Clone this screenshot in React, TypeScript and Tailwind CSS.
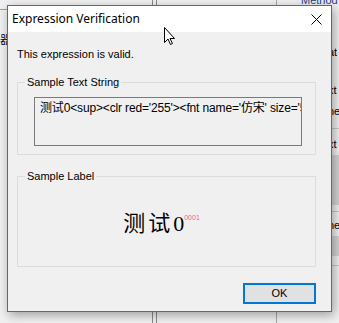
import React from 'react';

const sans = { fontFamily: '"Liberation Sans", "Noto Sans CJK SC", sans-serif' };

const GroupBox: React.FC<{ label: string; className?: string; children?: React.ReactNode }> = ({ label, className, children }) => {
    return (
        <div className={`relative w-[299px] border border-[#dcdcdc] ${className ?? ''}`}>
            <span className="absolute -top-[8px] left-[7px] bg-[#f0f0f0] px-[2px] text-[11px] leading-[14px] text-black">{label}</span>
            {children}
        </div>
    );
};

const App: React.FC = () => {
    return (
        <div className="relative w-[339px] h-[323px] overflow-hidden bg-[#f0f0f0]" style={sans}>
            {/* window behind the dialog */}
            <div className="absolute inset-0 flex">
                <div className="w-[8px] flex flex-col pt-[9px]">
                    <div className="h-px bg-[#a0a0a0]"></div>
                    <span className="mt-[24px] text-[11px] leading-[13px] text-black">器</span>
                </div>
                <div className="flex-1 flex pl-[144px]">
                    <div className="w-[5px] border-x border-[#8a8a8a]"></div>
                    <div className="w-[120px] border-r border-[#a8a8a8]"></div>
                </div>
                <div className="w-[39px] flex flex-col text-[11px] leading-[13px] text-black">
                    <span className="-mt-[6px] pl-[1px] text-[#1a3a8a]">Method</span>
                    <span className="mt-[39px] pl-[28px]">at</span>
                    <span className="mt-[25px] pl-[28px]">xt</span>
                    <span className="mt-[8px] pl-[28px]">ne</span>
                    <div className="mt-[10px] ml-[30px] h-px bg-[#c8c8c8]"></div>
                    <span className="mt-[9px] pl-[28px]">xt</span>
                    <div className="mt-[4px] ml-[30px] h-[50px] bg-[#d4d4d4]"></div>
                    <div className="mt-[6px] ml-[30px] h-px bg-[#c8c8c8]"></div>
                    <span className="mt-[7px] pl-[28px]">ne</span>
                    <div className="mt-[4px] ml-[30px] h-[20px] bg-[#d4d4d4]"></div>
                    <div className="mt-[9px] ml-[30px] h-px bg-[#c8c8c8]"></div>
                </div>
            </div>

            {/* dialog */}
            <div className="absolute left-[7px] top-[5px] w-[325px] h-[307px] border border-[#2a7ba6] bg-[#f0f0f0] flex flex-col shadow-[2px_3px_10px_rgba(0,0,0,0.35)]">
                <div className="h-[26px] bg-white flex items-center justify-between pl-[4px] pr-[9px]">
                    <span className="text-[12px] text-black" style={{ fontFamily: '"Noto Sans", sans-serif' }}>Expression Verification</span>
                    <svg width="11" height="11" viewBox="0 0 11 11" className="mt-[1px]">
                        <path d="M0.5 0.5 L10.5 10.5 M10.5 0.5 L0.5 10.5" stroke="#000" strokeWidth="1" fill="none" />
                    </svg>
                </div>
                <div className="flex-1 flex flex-col items-start pl-[9px]">
                    <p className="mt-[16px] text-[11px] leading-[13px] text-black">This expression is valid.</p>
                    <GroupBox label="Sample Text String" className="mt-[21px] h-[73px] pt-[14px] pl-[16px]">
                        <div className="w-[268px] h-[49px] border border-[#7a7a7a] bg-[#f0f0f0] overflow-hidden whitespace-nowrap pl-[5px] pt-[2px] text-[12px] leading-[16px] tracking-[-0.15px] text-black">
                            测试0&lt;sup&gt;&lt;clr red='255'&gt;&lt;fnt name='仿宋' size='5'&gt;0001&lt;/fnt&gt;&lt;/clr&gt;&lt;/sup&gt;
                        </div>
                    </GroupBox>
                    <GroupBox label="Sample Label" className="mt-[21px] h-[91px] flex items-center justify-center pr-[10px]">
                        <span className="text-[22px] leading-[26px] tracking-[3px] text-black mt-[2px]" style={{ fontFamily: '"Noto Sans CJK SC", serif' }}>
                            测试<span className="tracking-normal" style={{ fontFamily: '"Liberation Serif", serif' }}>0</span>
                        </span>
                        <span className="text-[7px] leading-[7px] text-[#ff5c8a] -mt-[8px]">0001</span>
                    </GroupBox>
                    <button className="self-end mr-[15px] mt-[16px] w-[73px] h-[21px] border-2 border-[#0078d7] bg-[#e1e1e1] text-[11px] text-black">OK</button>
                </div>
            </div>
            {/* cursor */}
            <svg className="absolute left-[164px] top-[27px]" width="12" height="19" viewBox="0 0 12 19">
                <path d="M0.5 0.5 L0.5 15.5 L4 12 L6.5 17.5 L8.5 16.5 L6 11.5 L10.5 11.5 Z" fill="#fff" stroke="#000" strokeWidth="1" />
            </svg>
        </div>
    );
};

export default App;
